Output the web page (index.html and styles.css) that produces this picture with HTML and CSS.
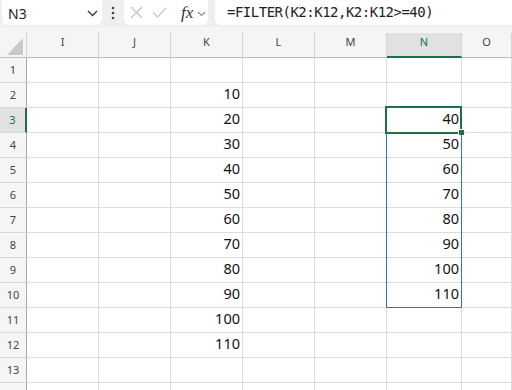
FILE: index.html
```html
<!DOCTYPE html>
<html lang="ja">
<head>
  <meta charset="UTF-8">
  <title>FILTER</title>
  <link rel="stylesheet" href="styles.css">
</head>
<body>

<!-- Formula bar -->
<div class="toolbar">
  <div class="namebox">
    <span class="name">N3</span>
    <svg class="chev" width="11" height="7" viewBox="0 0 11 7"><path d="M1 1 L5.5 5.5 L10 1" fill="none" stroke="#333" stroke-width="1.3"/></svg>
  </div>
  <div class="grip">
    <svg width="4" height="14" viewBox="0 0 4 14"><circle cx="2" cy="2" r="1.3" fill="#444"/><circle cx="2" cy="7" r="1.3" fill="#444"/><circle cx="2" cy="12" r="1.3" fill="#444"/></svg>
  </div>
  <div class="fxbox">
    <svg class="cancel" width="13" height="13" viewBox="0 0 13 13"><path d="M1 1 L12 12 M12 1 L1 12" stroke="#c2c2c2" stroke-width="1.1"/></svg>
    <svg class="enter" width="15" height="11" viewBox="0 0 15 11"><path d="M1 5.5 L5.5 10 L14 1" fill="none" stroke="#c2c2c2" stroke-width="1.1"/></svg>
    <span class="fx">fx</span>
    <svg class="chev-s" width="9" height="6" viewBox="0 0 9 6"><path d="M1 1 L4.5 4.5 L8 1" fill="none" stroke="#8a8a8a" stroke-width="1.1"/></svg>
  </div>
  <div class="formula">=FILTER(K2:K12,K2:K12&gt;=40)</div>
</div>

<!-- Sheet -->
<div class="sheet">
  <div class="row colhead">
    <div class="corner"><svg width="27" height="24" viewBox="0 0 27 24"><polygon points="23,5 23,22 7,22" fill="#c9c9c9"/></svg></div>
    <div class="ch">I</div>
    <div class="ch">J</div>
    <div class="ch">K</div>
    <div class="ch">L</div>
    <div class="ch">M</div>
    <div class="ch active">N</div>
    <div class="ch">O</div>
  </div>

  <div class="rows">
    <div class="row"><div class="rh">1</div><div class="c"></div><div class="c"></div><div class="c"></div><div class="c"></div><div class="c"></div><div class="c"></div><div class="c"></div></div>
    <div class="row"><div class="rh">2</div><div class="c"></div><div class="c"></div><div class="c">10</div><div class="c"></div><div class="c"></div><div class="c"></div><div class="c"></div></div>
    <div class="row"><div class="rh active">3</div><div class="c"></div><div class="c"></div><div class="c">20</div><div class="c"></div><div class="c"></div><div class="c">40</div><div class="c"></div></div>
    <div class="row"><div class="rh">4</div><div class="c"></div><div class="c"></div><div class="c">30</div><div class="c"></div><div class="c"></div><div class="c">50</div><div class="c"></div></div>
    <div class="row"><div class="rh">5</div><div class="c"></div><div class="c"></div><div class="c">40</div><div class="c"></div><div class="c"></div><div class="c">60</div><div class="c"></div></div>
    <div class="row"><div class="rh">6</div><div class="c"></div><div class="c"></div><div class="c">50</div><div class="c"></div><div class="c"></div><div class="c">70</div><div class="c"></div></div>
    <div class="row"><div class="rh">7</div><div class="c"></div><div class="c"></div><div class="c">60</div><div class="c"></div><div class="c"></div><div class="c">80</div><div class="c"></div></div>
    <div class="row"><div class="rh">8</div><div class="c"></div><div class="c"></div><div class="c">70</div><div class="c"></div><div class="c"></div><div class="c">90</div><div class="c"></div></div>
    <div class="row"><div class="rh">9</div><div class="c"></div><div class="c"></div><div class="c">80</div><div class="c"></div><div class="c"></div><div class="c">100</div><div class="c"></div></div>
    <div class="row"><div class="rh">10</div><div class="c"></div><div class="c"></div><div class="c">90</div><div class="c"></div><div class="c"></div><div class="c">110</div><div class="c"></div></div>
    <div class="row"><div class="rh">11</div><div class="c"></div><div class="c"></div><div class="c">100</div><div class="c"></div><div class="c"></div><div class="c"></div><div class="c"></div></div>
    <div class="row"><div class="rh">12</div><div class="c"></div><div class="c"></div><div class="c">110</div><div class="c"></div><div class="c"></div><div class="c"></div><div class="c"></div></div>
    <div class="row"><div class="rh">13</div><div class="c"></div><div class="c"></div><div class="c"></div><div class="c"></div><div class="c"></div><div class="c"></div><div class="c"></div></div>
    <div class="row"><div class="rh"></div><div class="c"></div><div class="c"></div><div class="c"></div><div class="c"></div><div class="c"></div><div class="c"></div><div class="c"></div></div>

    <!-- spill range + active cell -->
    <div class="spill"></div>
    <div class="sel"></div>
    <div class="handle"></div>
  </div>
</div>

</body>
</html>
```

FILE: styles.css
```css
html, body {
  margin: 0;
  padding: 0;
  width: 512px;
  height: 390px;
  overflow: hidden;
  background-color: #ffffff;
  font-family: 'Noto Sans', 'Liberation Sans', sans-serif;
}

/* formula bar */
.toolbar {
  display: flex;
  align-items: flex-start;
  height: 27px;
  padding-left: 2px;
  background-color: #efefef;
}

.namebox {
  display: flex;
  align-items: center;
  width: 100px;
  height: 25px;
  box-sizing: border-box;
  padding: 1px 4px 0 6px;
  background-color: #fff;
  border-radius: 0 0 6px 6px;
}

.name {
  flex: 1;
  font-size: 14px;
  color: #222;
}

.chev {
  display: block;
  margin-top: 1px;
}

.grip {
  width: 22px;
  height: 25px;
  display: flex;
  align-items: center;
  justify-content: center;
}

.grip svg {
  display: block;
  margin-left: -1px;
}

.fxbox {
  display: flex;
  align-items: center;
  width: 84px;
  height: 25px;
  box-sizing: border-box;
  padding-left: 6px;
  background-color: #fff;
  border-radius: 0 0 6px 6px;
}

.fxbox svg {
  display: block;
}

.enter {
  margin-left: 9px;
}

.fx {
  margin-left: 14px;
  font-family: 'Liberation Serif', 'DejaVu Serif', serif;
  font-style: italic;
  font-size: 17px;
  color: #333;
  line-height: 25px;
}

.chev-s {
  margin-left: 4px;
  margin-top: 2px;
}

.formula {
  flex: 1;
  height: 25px;
  margin-left: 7px;
  padding-left: 12px;
  background-color: #fff;
  border-radius: 0 0 0 6px;
  font-family: 'DejaVu Sans Mono', 'Liberation Mono', monospace;
  font-size: 14px;
  letter-spacing: -0.5px;
  line-height: 25px;
  color: #222;
}

/* grid */
.sheet {
  padding-top: 6px;
  background-color: #f5f5f5;
}

.row {
  display: grid;
  grid-template-columns: 27px 72px 72px 72px 72px 72px 75px 1fr;
}

.colhead > div {
  height: 25px;
  box-sizing: border-box;
  border-bottom: 1px solid #bdbdbd;
}

.corner {
  border-right: 1px solid #d4d4d4;
}

.corner svg {
  display: block;
}

.ch {
  border-right: 1px solid #d4d4d4;
  text-align: center;
  font-size: 11px;
  line-height: 17px;
  color: #444;
}

.ch.active {
  background-color: #e1e1e1;
  border-bottom: 2px solid #1e7145;
  color: #1e7145;
}

.rows {
  position: relative;
  background-color: #fff;
}

.rh {
  height: 25px;
  box-sizing: border-box;
  background-color: #f5f5f5;
  border-right: 1px solid #a9a9a9;
  border-bottom: 1px solid #d9d9d9;
  text-align: center;
  font-size: 11px;
  line-height: 24px;
  color: #444;
}

.rh.active {
  background-color: #e1e1e1;
  border-right: 2px solid #1e7145;
  color: #1e7145;
}

.c {
  height: 25px;
  box-sizing: border-box;
  padding-right: 2px;
  border-right: 1px solid #dcdcdc;
  border-bottom: 1px solid #dcdcdc;
  text-align: right;
  font-size: 14.5px;
  line-height: 21px;
  color: #111;
}

.spill {
  position: absolute;
  left: 386px;
  top: 49px;
  width: 76px;
  height: 201px;
  box-sizing: border-box;
  border: 1px solid #2f6fd1;
}

.sel {
  position: absolute;
  left: 385px;
  top: 48px;
  width: 77px;
  height: 28px;
  box-sizing: border-box;
  border: 2px solid #1e7145;
}

.handle {
  position: absolute;
  left: 458px;
  top: 71px;
  width: 5px;
  height: 5px;
  background-color: #1e7145;
  border-left: 1px solid #fff;
  border-top: 1px solid #fff;
}
```
